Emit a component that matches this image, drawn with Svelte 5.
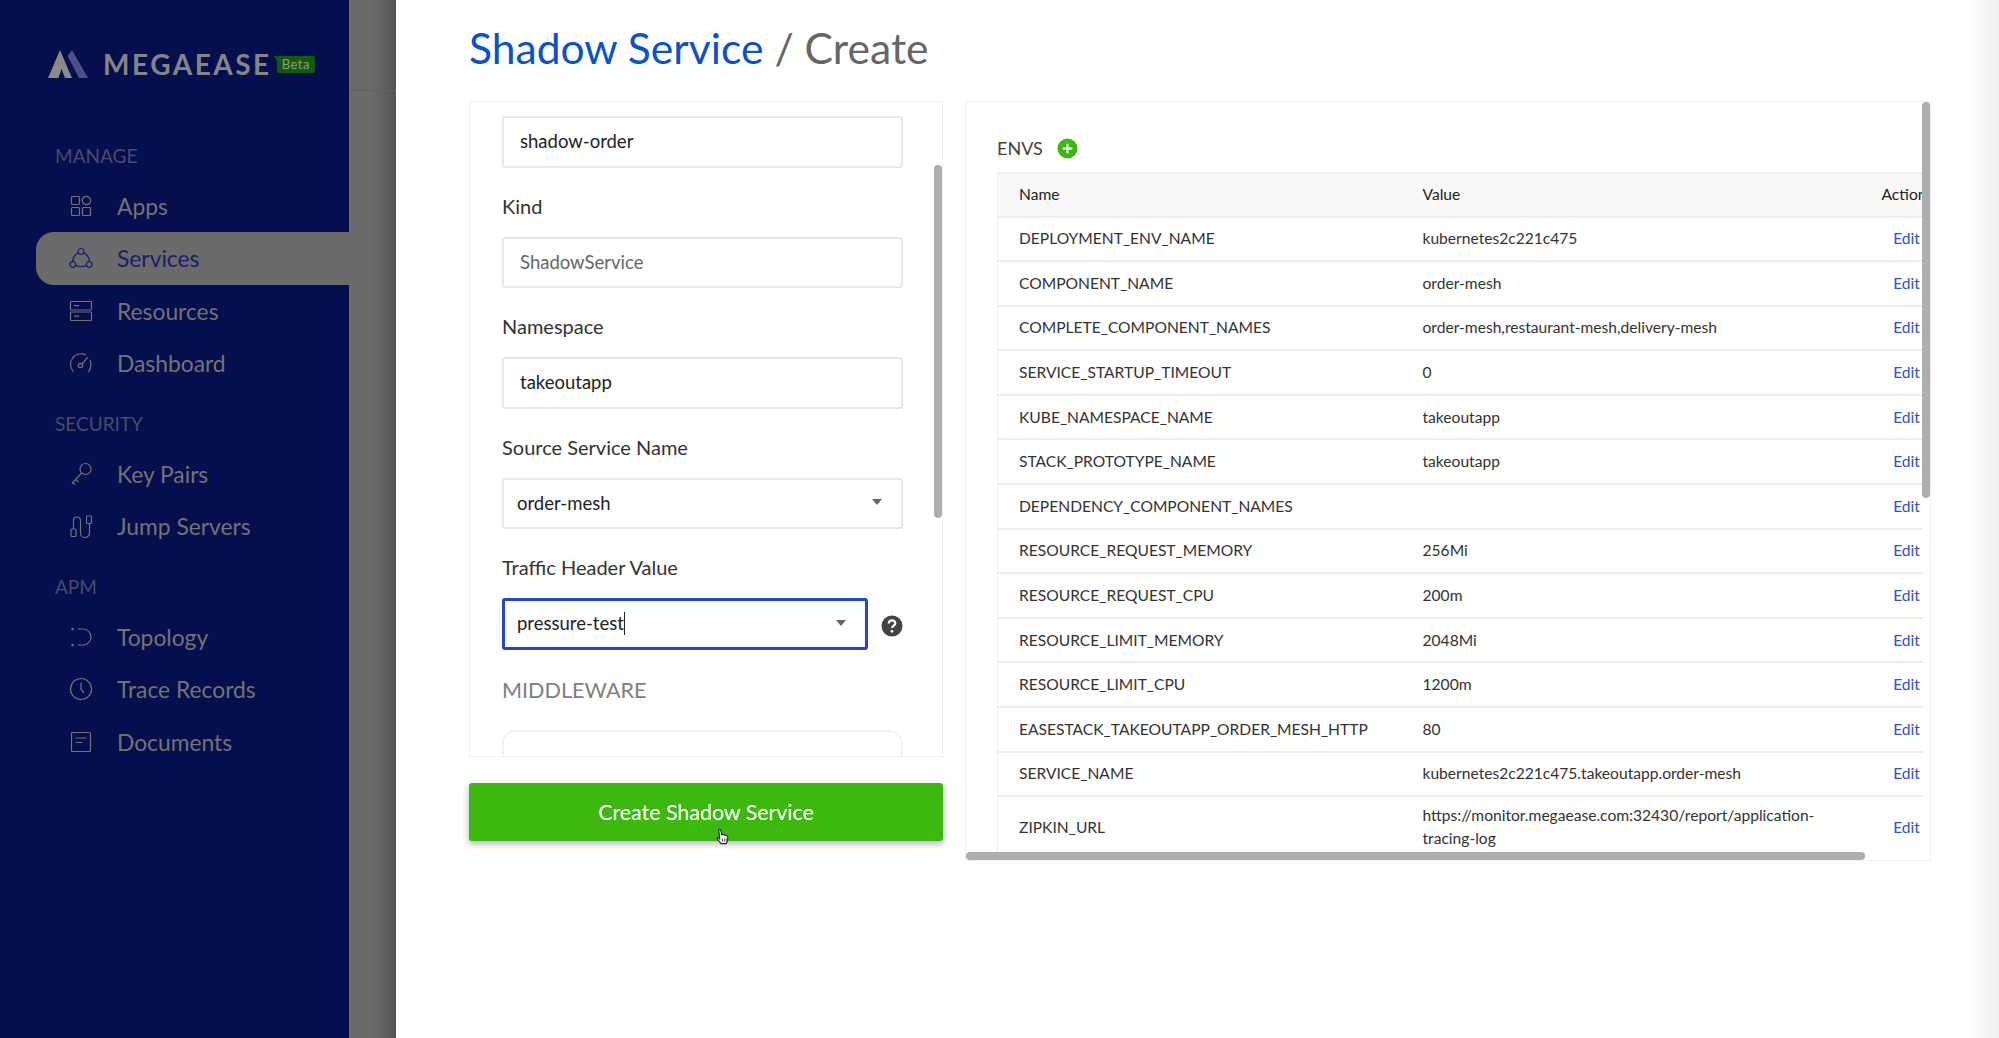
<script>
  const manage = [
    { key: 'apps', label: 'Apps' },
    { key: 'services', label: 'Services', active: true },
    { key: 'resources', label: 'Resources' },
    { key: 'dashboard', label: 'Dashboard' }
  ];
  const security = [
    { key: 'key', label: 'Key Pairs' },
    { key: 'jump', label: 'Jump Servers' }
  ];
  const apm = [
    { key: 'topology', label: 'Topology' },
    { key: 'trace', label: 'Trace Records' },
    { key: 'docs', label: 'Documents' }
  ];
  const groups = [
    { title: 'MANAGE', items: manage },
    { title: 'SECURITY', items: security },
    { title: 'APM', items: apm }
  ];
  const envs = [
    ['DEPLOYMENT_ENV_NAME', 'kubernetes2c221c475'],
    ['COMPONENT_NAME', 'order-mesh'],
    ['COMPLETE_COMPONENT_NAMES', 'order-mesh,restaurant-mesh,delivery-mesh'],
    ['SERVICE_STARTUP_TIMEOUT', '0'],
    ['KUBE_NAMESPACE_NAME', 'takeoutapp'],
    ['STACK_PROTOTYPE_NAME', 'takeoutapp'],
    ['DEPENDENCY_COMPONENT_NAMES', ''],
    ['RESOURCE_REQUEST_MEMORY', '256Mi'],
    ['RESOURCE_REQUEST_CPU', '200m'],
    ['RESOURCE_LIMIT_MEMORY', '2048Mi'],
    ['RESOURCE_LIMIT_CPU', '1200m'],
    ['EASESTACK_TAKEOUTAPP_ORDER_MESH_HTTP', '80'],
    ['SERVICE_NAME', 'kubernetes2c221c475.takeoutapp.order-mesh'],
    ['ZIPKIN_URL', 'https://monitor.megaease.com:32430/report/application-tracing-log']
  ];
</script>

{#snippet navIcon(key)}
  <svg class="nav-icon" viewBox="0 0 24 24" fill="none" stroke="currentColor" stroke-width="1.2">
    {#if key === 'apps'}
      <rect x="2.5" y="2.5" width="8" height="8" rx="1" />
      <circle cx="17.5" cy="6.5" r="4.2" />
      <rect x="2.5" y="13.5" width="8" height="8" rx="1" />
      <rect x="13.5" y="13.5" width="8" height="8" rx="1" />
    {:else if key === 'services'}
      <circle cx="12" cy="5.500" r="3" />
      <circle cx="3.800" cy="18.500" r="2.800" />
      <circle cx="20.200" cy="18.500" r="2.800" />
      <path d="M9.300 6.800C5.800 8.500 3.800 11.500 3.600 15.700M14.700 6.800C18.200 8.500 20.200 11.500 20.400 15.700M6.800 19.500c3.400 1.600 7 1.600 10.400 0" />
    {:else if key === 'resources'}
      <rect x="1.5" y="2.5" width="21" height="8.5" rx="0.8" />
      <rect x="1.5" y="13" width="21" height="8.5" rx="0.8" />
      <path d="M5 6.7h5M5 17.2h5" />
    {:else if key === 'dashboard'}
      <path d="M4.500 21C1 16.500 0.500 11 4 6.500 7.500 2.500 13 2 17 4M21 9c1.500 4 1 8.500-1.500 12" />
      <circle cx="11.500" cy="14.500" r="2.200" />
      <path d="M13 13l5.500-6.500" />
    {:else if key === 'key'}
      <circle cx="16.500" cy="7" r="5.500" />
      <path d="M12.500 11L3 21.500M6.500 17.500l3 2.500M3.800 20.500l2.200 1.800" />
    {:else if key === 'jump'}
      <rect x="2" y="15" width="5" height="7.500" rx="1" />
      <rect x="17.500" y="2" width="5" height="7.500" rx="1" />
      <path d="M4.500 15V6.500a3.500 3.500 0 0 1 7 0V19a4.500 4.500 0 0 0 9 0V9.500" />
    {:else if key === 'topology'}
      <path d="M9 4h5a8 8 0 0 1 0 16H9" />
      <circle cx="3.500" cy="4" r="1.200" fill="currentColor" stroke="none" />
      <circle cx="3.500" cy="20" r="1.200" fill="currentColor" stroke="none" />
    {:else if key === 'trace'}
      <circle cx="12" cy="12" r="10.500" />
      <path d="M12 5.500V12.500l3 3.500" />
    {:else}
      <rect x="2.500" y="2.500" width="19" height="19" rx="1" />
      <path d="M6.500 8h11M6.500 12.500h7" />
    {/if}
  </svg>
{/snippet}

<div class="page">
  <aside class="sidebar">
    <div class="brand">
      <svg class="logo" viewBox="0 0 40 28">
        <path d="M0 28L12 0l12 28H17l-3.500-9-3 9z" fill="#8a8a8a" />
        <path d="M24 0l16 28h-9L19.500 6z" fill="#4a5282" />
      </svg>
      <span class="wordmark">MEGAEASE</span>
      <span class="beta">Beta</span>
    </div>
    {#each groups as group}
      <div class="group-title">{group.title}</div>
      <ul class="nav">
        {#each group.items as item}
          <li class:active={item.active}>
            {@render navIcon(item.key)}
            <span>{item.label}</span>
          </li>
        {/each}
      </ul>
    {/each}
  </aside>

  <div class="backdrop">
    <div class="backdrop-head"></div>
  </div>

  <main class="panel">
    <h1><span class="crumb">Shadow Service</span> / Create</h1>
    <div class="columns">
      <div class="left">
        <div class="form-card">
          <form class="form">
            <div class="input">shadow-order</div>
            <label for="kind">Kind</label>
            <div class="input muted" id="kind">ShadowService</div>
            <label for="ns">Namespace</label>
            <div class="input" id="ns">takeoutapp</div>
            <label for="src">Source Service Name</label>
            <div class="input select" id="src">order-mesh<i class="caret"></i></div>
            <label for="hdr">Traffic Header Value</label>
            <div class="with-help">
              <div class="input select focus" id="hdr">pressure-test<b class="cursor"></b><i class="caret"></i></div>
              <svg class="help" viewBox="0 0 22 22">
                <circle cx="11" cy="11" r="10.500" fill="#444" />
                <path d="M7.800 8.500c0-4.200 6.500-4.200 6.500-.2 0 2.400-3.300 2.500-3.300 4.700" fill="none" stroke="#fff" stroke-width="2.200" />
                <circle cx="11" cy="16.300" r="1.400" fill="#fff" />
              </svg>
            </div>
            <div class="section">MIDDLEWARE</div>
            <div class="mid-box"></div>
          </form>
          <div class="thumb-y form-thumb"></div>
        </div>
        <button class="create" type="button">Create Shadow Service</button>
      </div>

      <section class="env-card">
        <div class="env-head">
          <span>ENVS</span>
          <svg class="plus" viewBox="0 0 22 22">
            <circle cx="11" cy="11" r="10.500" fill="#3cb80f" />
            <path d="M11 6v10M6 11h10" stroke="#fff" stroke-width="2" />
          </svg>
        </div>
        <div class="table-clip">
          <table>
            <colgroup><col class="c-name" /><col class="c-value" /><col class="c-action" /></colgroup>
            <thead>
              <tr><th>Name</th><th>Value</th><th class="act head-act">Action</th></tr>
            </thead>
            <tbody>
              {#each envs as env}
                <tr>
                  <td>{env[0]}</td>
                  <td>{env[1]}</td>
                  <td class="act"><a href="#edit">Edit</a></td>
                </tr>
              {/each}
            </tbody>
          </table>
        </div>
        <div class="thumb-y env-thumb"></div>
        <div class="thumb-x"></div>
      </section>
    </div>
    <svg class="pointer" viewBox="0 0 16 20">
      <path d="M4 1.500c1-.8 2 0 2.200 1l1 4.500 1-.3 1 .4 1.200.1 1 .6c1 .1 2 .6 2.200 1.500.3 2-.2 5-1.500 7.200H6.500C5 14.500 3.500 13 2.500 11.500 2 10.500 3 9.800 4 10.500l1 1z" fill="#fff" stroke="#222" stroke-width="1.200" />
      <path d="M8 11v3.500M10 11v3.500M12 11v3.500" stroke="#222" stroke-width="0.800" />
    </svg>
  </main>
</div>

<style>
  :global(body) {
    margin: 0;
    background: #fff;
  }

  .page {
    display: flex;
    height: 1038px;
    overflow: hidden;
    font-family: Lato, "Noto Sans", sans-serif;
  }

  .sidebar {
    width: 349px;
    flex: none;
    background: #050f4d;
    color: #737373;
    padding-top: 50px;
    box-sizing: border-box;
  }

  .brand {
    display: flex;
    align-items: center;
    height: 28px;
    margin-left: 48px;
    margin-bottom: 66px;
  }

  .logo {
    width: 40px;
    height: 28px;
    margin-right: 15px;
  }

  .wordmark {
    font-size: 28px;
    font-weight: 700;
    letter-spacing: 2.500px;
    color: #858585;
  }

  .beta {
    position: relative;
    margin-left: 5px;
    background: #135a0c;
    color: #8b9d85;
    font-size: 13px;
    line-height: 17px;
    padding: 0 5px;
    border-radius: 2px;
    letter-spacing: 0.5px;
  }

  .beta::before {
    content: "";
    position: absolute;
    left: -3px;
    top: 0;
    border-top: 5px solid #135a0c;
    border-left: 3px solid transparent;
  }

  .group-title {
    margin-left: 55px;
    font-size: 19px;
    line-height: 24px;
    color: #474c6b;
  }

  .nav {
    list-style: none;
    margin: 12px 0 22.500px;
    padding: 0;
  }

  .nav li {
    display: flex;
    align-items: center;
    height: 52.300px;
    margin-left: 36px;
    padding-left: 33px;
    font-size: 22.800px;
    border-radius: 18px 0 0 18px;
  }

  .nav li.active {
    background: #6b6b6b;
    color: #17216a;
  }

  .nav-icon {
    width: 24px;
    height: 24px;
    margin-right: 24px;
    flex: none;
  }

  .backdrop {
    width: 47px;
    flex: none;
    background: linear-gradient(to right, #6b6b6b 50%, #555 100%);
  }

  .backdrop-head {
    height: 90px;
    border-bottom: 1px solid #626262;
  }

  .panel {
    position: relative;
    flex: 1;
    min-width: 0;
    padding: 0 68px 0 73px;
    background: linear-gradient(to right, #fff 98%, #eee 100%);
  }

  h1 {
    margin: 0;
    height: 101px;
    box-sizing: border-box;
    padding-top: 21px;
    font-size: 42.600px;
    line-height: 54px;
    font-weight: 400;
    color: #666;
  }

  .crumb {
    color: #0a52cc;
  }

  .columns {
    display: flex;
    align-items: flex-start;
    gap: 22px;
  }

  .left {
    width: 474px;
    flex: none;
  }

  .form-card {
    position: relative;
    height: 656px;
    box-sizing: border-box;
    border: 1px solid #eef0f6;
    overflow: hidden;
  }

  .form {
    padding: 14px 39px 0 32px;
  }

  label {
    display: block;
    font-size: 20px;
    line-height: 28px;
    margin: 24px 0 17px;
    color: #333;
  }

  .input {
    position: relative;
    height: 51.500px;
    box-sizing: border-box;
    border: 2px solid #e8e8e8;
    border-radius: 3px;
    padding-left: 16px;
    font-size: 18.500px;
    line-height: 47px;
    color: #222;
  }

  .muted {
    color: #666;
  }

  .select {
    padding-left: 13px;
  }

  .caret {
    position: absolute;
    right: 19px;
    top: 19px;
    border: 5.500px solid transparent;
    border-top: 6px solid #666;
    border-bottom: 0;
  }

  .focus {
    flex: 1;
    border: 3px solid #2447d2;
    line-height: 45px;
    padding-left: 12px;
  }

  .cursor {
    display: inline-block;
    width: 1.500px;
    height: 23px;
    background: #222;
    vertical-align: -5px;
  }

  .with-help {
    display: flex;
    align-items: center;
    gap: 13px;
  }

  .help {
    width: 22px;
    height: 22px;
    flex: none;
    margin-top: 4px;
  }

  .section {
    margin-top: 25.500px;
    font-size: 21.600px;
    line-height: 30px;
    color: #808080;
  }

  .mid-box {
    margin-top: 25px;
    height: 60px;
    border: 2px solid #f2f2f2;
    border-radius: 14px;
  }

  .thumb-y {
    position: absolute;
    width: 8px;
    border-radius: 4px;
    background: #aeaeae;
  }

  .form-thumb {
    right: 0;
    top: 63px;
    height: 353px;
  }

  .create {
    display: block;
    width: 100%;
    height: 58px;
    margin-top: 26px;
    border: 0;
    border-radius: 3px;
    background: #3cb80f;
    color: #fff;
    font-family: inherit;
    font-size: 21.400px;
    box-shadow: 0 3px 7px rgba(0, 0, 0, 0.3);
  }

  .env-card {
    position: relative;
    flex: 1;
    min-width: 0;
    height: 760px;
    box-sizing: border-box;
    border: 1px solid #eef0f6;
    padding: 0 7px 0 31px;
    overflow: hidden;
  }

  .env-head {
    display: flex;
    align-items: center;
    gap: 14px;
    height: 70px;
    box-sizing: border-box;
    padding-top: 22px;
    font-size: 18px;
    color: #444;
  }

  .plus {
    width: 21px;
    height: 21px;
  }

  .table-clip {
    overflow: hidden;
  }

  table {
    width: 954px;
    table-layout: fixed;
    border-collapse: collapse;
    font-size: 15.600px;
    color: #333;
    border-left: 1px solid #eee;
  }

  .c-name { width: 404px; }
  .c-value { width: 460px; }
  .c-action { width: 90px; }

  th {
    height: 39.500px;
    background: #f8f8f8;
    border-top: 2px solid #eee;
    border-bottom: 2px solid #eee;
    font-weight: 400;
    color: #222;
    text-align: left;
    padding: 0 0 2px 21px;
    box-sizing: content-box;
  }

  td {
    height: 44.600px;
    box-sizing: border-box;
    padding: 0 30px 0 21px;
    border-bottom: 2px solid #eee;
    line-height: 23px;
  }

  tr:last-child td {
    height: 61px;
    border-bottom: 0;
  }

  .act {
    padding: 0;
    text-align: center;
  }

  .head-act {
    padding: 0 5px 2px 0;
  }

  a {
    color: #2f50d0;
    text-decoration: none;
  }

  .env-thumb {
    right: 0;
    top: 0;
    height: 396px;
  }

  .thumb-x {
    position: absolute;
    left: 0;
    bottom: 0;
    width: 899px;
    height: 8px;
    border-radius: 4px;
    background: #aeaeae;
  }

  .pointer {
    position: absolute;
    left: 319px;
    top: 828px;
    width: 15px;
    height: 19px;
  }
</style>
